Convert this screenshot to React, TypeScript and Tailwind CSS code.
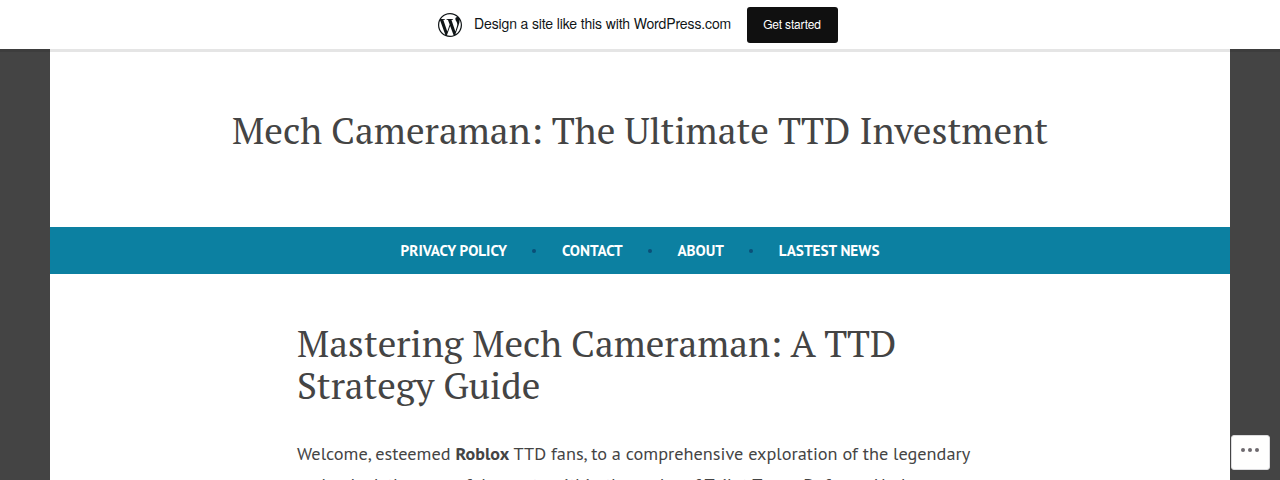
import { SiWordpress } from "react-icons/si";

const navItems = ["PRIVACY POLICY", "CONTACT", "ABOUT", "LASTEST NEWS"];

function Banner() {
  return (
    <div className="relative flex h-[49px] items-center justify-center bg-white pr-1 font-['TeX_Gyre_Heros',FreeSans,'Liberation_Sans',Arial,sans-serif] shadow-[0_3px_0_rgba(0,0,0,0.1)]">
      <SiWordpress className="size-6 text-[#101517]" />
      <span className="ml-3 w-[257px] pb-[3px] text-sm tracking-[-0.13px] whitespace-nowrap text-[#101517]">
        Design a site like this with WordPress.com
      </span>
      <button className="ml-4 h-9 w-[91px] rounded-[3px] bg-[#101010] pr-[1px] pb-[2px] text-xs tracking-[-0.15px] text-white">
        Get started
      </button>
    </div>
  );
}

function Nav() {
  return (
    <nav className="flex h-[47px] items-center justify-center bg-[#0c80a1] pt-px text-[15.2px] font-bold text-white">
      {navItems.map((item, i) => (
        <span key={item} className="flex items-center">
          {i > 0 && <span className="mr-[25.4px] ml-[25.4px] size-1 rounded-full bg-[#0a4f78]" />}
          {item}
        </span>
      ))}
    </nav>
  );
}

export default function App() {
  return (
    <div className="relative h-[480px] overflow-hidden bg-[#444444] font-['PT_Sans','Open_Sans',sans-serif] text-[#444444]">
      <Banner />
      <main className="mx-[50px] h-[431px] overflow-hidden bg-white">
        <header className="h-[178px] pt-[60px] text-center">
          <h1 className="font-['PT_Serif','Liberation_Serif',serif] text-[37.2px] leading-[42px]">
            Mech Cameraman: The Ultimate TTD Investment
          </h1>
        </header>
        <Nav />
        <article className="ml-[247px] w-[686px] pt-12">
          <h2 className="font-['PT_Serif','Liberation_Serif',serif] text-[37.1px] leading-[42px]">
            Mastering Mech Cameraman: A TTD Strategy Guide
          </h2>
          <p className="mt-8 text-[18.27px] leading-[31px] whitespace-nowrap">
            Welcome, esteemed <b className="text-[18px] tracking-[0.1px]">Roblox</b> TTD fans, to a comprehensive exploration of the legendary
            <br />
            and unlock the powerful secrets within the realm of Toilet Tower Defense. Under
          </p>
        </article>
      </main>
      <button
        aria-label="More"
        className="absolute top-[435px] left-[1231px] flex h-[35px] w-[39px] items-center justify-center gap-[3px] rounded-[3px] border border-[#dcdcde] bg-[#fffffe] pr-[1px] pb-[5px]"
      >
        <span className="size-1 rounded-full bg-[#6e6a6e]" />
        <span className="size-1 rounded-full bg-[#6e6a6e]" />
        <span className="size-1 rounded-full bg-[#6e6a6e]" />
      </button>
    </div>
  );
}
